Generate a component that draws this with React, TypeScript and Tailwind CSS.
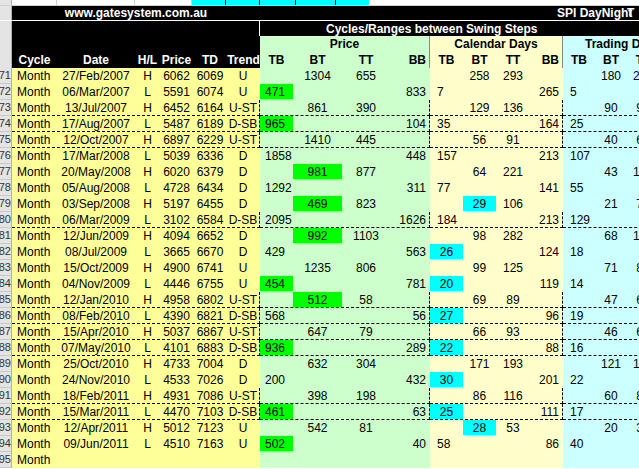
const rows: [string, string, string, string, string, string, string, string, string, string, string, string, string, string, string, string, string][] = [
  ["71","27/Feb/2007","H","6062","6069","U","","1304","655","","","258","293","","","180","206"],
  ["72","06/Mar/2007","L","5591","6074","U","471","","","833","7","","","265","5","",""],
  ["73","13/Jul/2007","H","6452","6164","U-ST","","861","390","","","129","136","","","90","92"],
  ["74","17/Aug/2007","L","5487","6189","D-SB","965","","","104","35","","","164","25","",""],
  ["75","12/Oct/2007","H","6897","6229","U-ST","","1410","445","","","56","91","","","40","63"],
  ["76","17/Mar/2008","L","5039","6336","D","1858","","","448","157","","","213","107","",""],
  ["77","20/May/2008","H","6020","6379","D","","981","877","","","64","221","","","43","151"],
  ["78","05/Aug/2008","L","4728","6434","D","1292","","","311","77","","","141","55","",""],
  ["79","03/Sep/2008","H","5197","6455","D","","469","823","","","29","106","","","21","70"],
  ["80","06/Mar/2009","L","3102","6584","D-SB","2095","","","1626","184","","","213","129","",""],
  ["81","12/Jun/2009","H","4094","6652","D","","992","1103","","","98","282","","","68","190"],
  ["82","08/Jul/2009","L","3665","6670","D","429","","","563","26","","","124","18","",""],
  ["83","15/Oct/2009","H","4900","6741","U","","1235","806","","","99","125","","","71","82"],
  ["84","04/Nov/2009","L","4446","6755","U","454","","","781","20","","","119","14","",""],
  ["85","12/Jan/2010","H","4958","6802","U-ST","","512","58","","","69","89","","","47","61"],
  ["86","08/Feb/2010","L","4390","6821","D-SB","568","","","56","27","","","96","19","",""],
  ["87","15/Apr/2010","H","5037","6867","U-ST","","647","79","","","66","93","","","46","62"],
  ["88","07/May/2010","L","4101","6883","D-SB","936","","","289","22","","","88","16","",""],
  ["89","25/Oct/2010","H","4733","7004","D","","632","304","","","171","193","","","121","131"],
  ["90","24/Nov/2010","L","4533","7026","D","200","","","432","30","","","201","22","",""],
  ["91","18/Feb/2011","H","4931","7086","U-ST","","398","198","","","86","116","","","60","82"],
  ["92","15/Mar/2011","L","4470","7103","D-SB","461","","","63","25","","","111","17","",""],
  ["93","12/Apr/2011","H","5012","7123","U","","542","81","","","28","53","","","20","37"],
  ["94","09/Jun/2011","L","4510","7163","U","502","","","40","58","","","86","40","",""],
  ["95","","","","","","","","","","","","","","","",""],
];
const greenTB = new Set(["72","74","84","88","92","94"]);
const greenBT = new Set(["77","79","81","85"]);
const cyanTB = new Set(["82","84","86","88","90","92"]);
const cyanBT = new Set(["79","93"]);
const dashed = new Set(["73","74","75","80","85","86","87","88","91","92"]);

function C({ w, cls = "", children }: { w: string; cls?: string; children?: React.ReactNode }) {
  return <div className={`${w} shrink-0 h-full flex items-center whitespace-nowrap ${cls}`}>{children}</div>;
}

export default function App() {
  return (
    <div className="w-[639px] h-[469px] overflow-hidden bg-white text-[12px] text-black" style={{ fontFamily: '"Liberation Sans", Arial, sans-serif' }}>
      <div className="flex h-[6px] border-b border-[#d0d0d0]">
        <div className="w-[12px] shrink-0 bg-[#e4e4e4] border-r border-[#b0b0b0]" />
        <div className="w-[45px] shrink-0 border-r border-[#d0d0d0]" />
        <div className="w-[78px] shrink-0 border-r border-[#d0d0d0]" />
        <div className="w-[57px] shrink-0 border-r border-[#d0d0d0]" />
        <div className="w-[34px] shrink-0 bg-[#00ffff] border-r border-black" />
        <div className="w-[34px] shrink-0 bg-[#00ffff] border-r border-black" />
        <div className="w-[36px] shrink-0 bg-[#00ffff] border-r border-black" />
        <div className="w-[40px] shrink-0 bg-[#00ffff] border-r border-black" />
        <div className="w-[33px] shrink-0 bg-[#00ffff]" />
        <div className="flex-1" />
      </div>
      <div className="flex h-[14px] bg-black text-white font-bold">
        <div className="w-[12px] shrink-0 bg-[#e4e4e4] border-r border-[#b0b0b0]" />
        <div className="w-[248px] shrink-0 flex items-center justify-center">www.gatesystem.com.au</div>
        <div className="w-[297px] shrink-0" />
        <div className="w-[70px] shrink-0 flex items-center whitespace-nowrap">SPI DayNight</div>
        <div className="w-[12px] shrink-0 flex items-center">T</div>
      </div>
      <div className="flex h-[16px] bg-black text-white font-bold border-t border-white">
        <div className="w-[12px] shrink-0 bg-[#e4e4e4] border-r border-[#b0b0b0]" />
        <div className="w-[248px] shrink-0 border-r border-white" />
        <div className="w-[379px] shrink-0 flex items-center pl-[66px] whitespace-nowrap">Cycles/Ranges between Swing Steps</div>
      </div>
      <div className="flex h-[16px] font-bold">
        <div className="w-[12px] shrink-0 bg-[#e4e4e4] border-r border-[#b0b0b0]" />
        <div className="w-[248px] shrink-0 bg-black" />
        <div className="w-[170px] shrink-0 bg-[#ccffcc] flex items-center justify-center border-r border-[#888]">Price</div>
        <div className="w-[133px] shrink-0 bg-[#ffffcc] flex items-center justify-center border-r border-[#888]">Calendar Days</div>
        <div className="w-[120px] shrink-0 bg-[#ccffff] flex items-center pl-[22px] whitespace-nowrap">Trading Days</div>
      </div>
      <div className="flex h-[16px] font-bold">
        <div className="w-[12px] shrink-0 bg-[#e4e4e4] border-r border-[#b0b0b0]" />
        <div className="flex shrink-0 bg-black text-white w-[248px] h-full">
          <C w="w-[45px]" cls="justify-center">Cycle</C>
          <C w="w-[78px]" cls="justify-center">Date</C>
          <C w="w-[25px]" cls="justify-center">H/L</C>
          <C w="w-[33px]" cls="justify-center">Price</C>
          <C w="w-[34px]" cls="justify-center">TD</C>
          <C w="w-[33px]" cls="justify-center">Trend</C>
        </div>
        <div className="flex shrink-0 bg-[#ccffcc] w-[170px] h-full border-r border-[#888]">
          <C w="w-[33px]" cls="justify-center">TB</C>
          <C w="w-[49px]" cls="justify-center">BT</C>
          <C w="w-[48px]" cls="justify-center">TT</C>
          <C w="w-[39px]" cls="justify-end pr-[3px]">BB</C>
        </div>
        <div className="flex shrink-0 bg-[#ffffcc] w-[133px] h-full border-r border-[#888]">
          <C w="w-[33px]" cls="justify-center">TB</C>
          <C w="w-[33px]" cls="justify-center">BT</C>
          <C w="w-[34px]" cls="justify-center">TT</C>
          <C w="w-[32px]" cls="justify-end pr-[3px]">BB</C>
        </div>
        <div className="flex shrink-0 bg-[#ccffff] w-[120px] h-full">
          <C w="w-[32px]" cls="justify-center">TB</C>
          <C w="w-[32px]" cls="justify-center">BT</C>
          <C w="w-[32px]" cls="justify-center">TT</C>
        </div>
      </div>
      {rows.map((r) => {
        const d = dashed.has(r[0]) ? "border-b border-dashed border-black" : "border-b border-transparent";
        return (
          <div key={r[0]} className="flex h-[16px]">
            <C w="w-[12px]" cls="bg-[#e4e4e4] border-r border-[#b0b0b0] border-b border-b-[#c8c8c8] justify-end text-[11px] text-[#333] overflow-hidden">{r[0]}</C>
            <div className={`flex shrink-0 w-[248px] h-full bg-[#ffff99] border-r border-black ${d}`}>
              <C w="w-[45px]" cls="pl-[5px]">Month</C>
              <C w="w-[78px]" cls="justify-center">{r[1]}</C>
              <C w="w-[25px]" cls="justify-center">{r[2]}</C>
              <C w="w-[33px]" cls="justify-center">{r[3]}</C>
              <C w="w-[34px]" cls="justify-center">{r[4]}</C>
              <C w="w-[32px]" cls="justify-center">{r[5]}</C>
            </div>
            <div className={`flex shrink-0 w-[170px] h-full bg-[#ccffcc] border-r border-black ${d}`}>
              <C w="w-[33px]" cls={`pl-[5px] ${greenTB.has(r[0]) ? "bg-[#00ff00]" : ""}`}>{r[6]}</C>
              <C w="w-[49px]" cls={`justify-center ${greenBT.has(r[0]) ? "bg-[#00ff00]" : ""}`}>{r[7]}</C>
              <C w="w-[48px]" cls="justify-center">{r[8]}</C>
              <C w="w-[39px]" cls="justify-end pr-[3px]">{r[9]}</C>
            </div>
            <div className={`flex shrink-0 w-[133px] h-full bg-[#ffffcc] border-r border-black ${d}`}>
              <C w="w-[33px]" cls={cyanTB.has(r[0]) ? "bg-[#00ffff] justify-center" : "pl-[7px]"}>{r[10]}</C>
              <C w="w-[33px]" cls={`justify-center ${cyanBT.has(r[0]) ? "bg-[#00ffff]" : ""}`}>{r[11]}</C>
              <C w="w-[34px]" cls="justify-center">{r[12]}</C>
              <C w="w-[32px]" cls="justify-end pr-[3px]">{r[13]}</C>
            </div>
            <div className={`flex shrink-0 w-[120px] h-full bg-[#ccffff] ${d}`}>
              <C w="w-[32px]" cls="pl-[7px]">{r[14]}</C>
              <C w="w-[32px]" cls="justify-center">{r[15]}</C>
              <C w="w-[32px]" cls="justify-center">{r[16]}</C>
            </div>
          </div>
        );
      })}
    </div>
  );
}
